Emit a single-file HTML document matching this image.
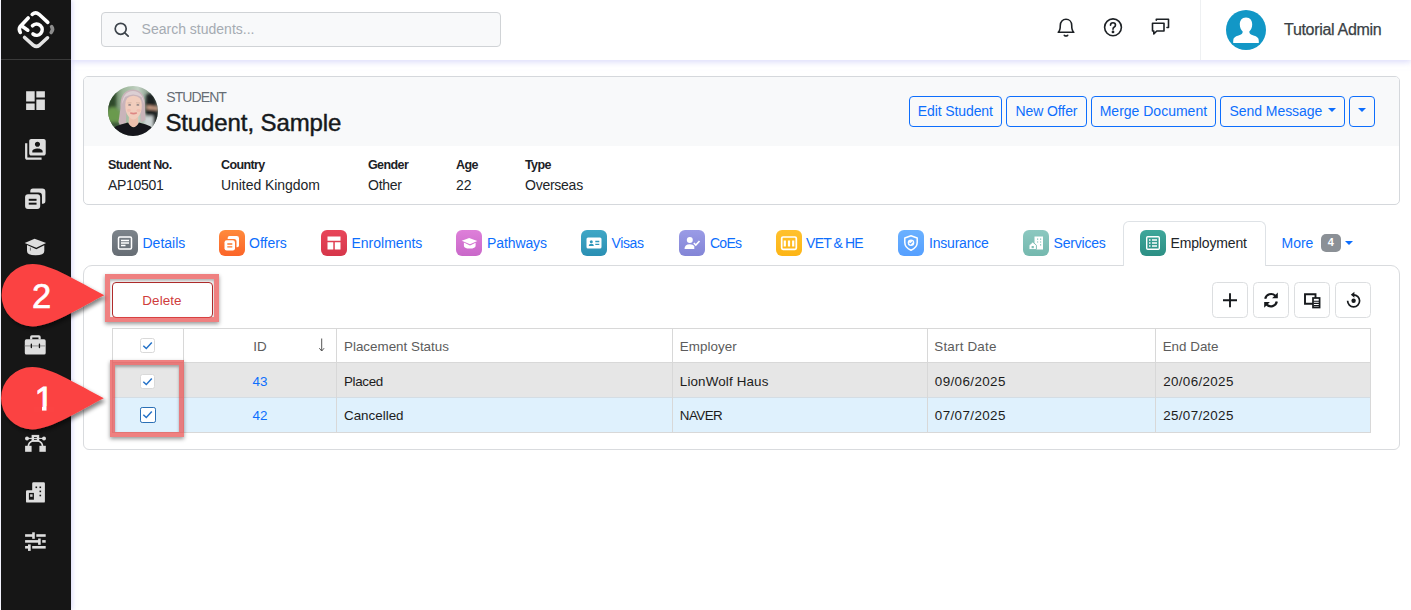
<!DOCTYPE html>
<html lang="en">
<head>
<meta charset="utf-8">
<title>Student - Employment</title>
<style>
*{box-sizing:border-box;margin:0;padding:0}
html,body{width:1411px;height:610px;overflow:hidden;background:#fff}
body{position:relative;font-family:"Liberation Sans",sans-serif;font-size:14px;color:#212529}
.abs{position:absolute}
.t{position:absolute;white-space:nowrap;line-height:1}
/* sidebar */
#side{z-index:5;position:absolute;left:1px;top:0;width:69.700px;height:610px;background:#161616;box-shadow:1px 0 5px rgba(190,190,245,.6)}
#side .div{position:absolute;left:0;top:59px;width:70px;height:1px;background:#3a3a3a}
#side svg{position:absolute}
/* topbar */
#top{position:absolute;left:71px;top:0;width:1340px;height:60px;background:#fff;box-shadow:0 2px 6px rgba(190,190,245,.55)}
#search{position:absolute;left:30px;top:12px;width:400px;height:34.500px;background:#f8f9fa;border:1px solid #d0d3d6;border-radius:4px}
#search span{position:absolute;left:39.600px;top:8.300px;font-size:14px;color:#a5abb2;line-height:16px}
#vsep{position:absolute;left:1128.900px;top:0;width:1px;height:60px;background:#eef0f2}
/* card */
#card{position:absolute;left:83px;top:75.800px;width:1316.500px;height:128.900px;border:1px solid #d5d8dc;border-radius:5px;background:#fff;overflow:hidden}
#card .hd{position:absolute;left:0;top:0;width:100%;height:68.800px;background:#f8f9fa}
.btn{position:absolute;top:18.800px;height:31.500px;border:1px solid #0d6efd;border-radius:4px;color:#0d6efd;font-size:14px;line-height:29.500px;text-align:center;background:transparent;white-space:nowrap}
.caret{position:absolute;width:0;height:0;border-left:4px solid transparent;border-right:4px solid transparent;border-top:4px solid #0d6efd}
.lab{position:absolute;top:81.400px;font-size:12.500px;font-weight:bold;color:#1c2126;line-height:14px;white-space:nowrap;letter-spacing:-.6px}
.val{position:absolute;top:99.900px;letter-spacing:-.05px;font-size:14px;color:#212529;line-height:16px;white-space:nowrap}
/* tabs */
.ic{position:absolute;top:230px;width:26px;height:26px;border-radius:6px}
.ic svg{position:absolute;left:0;top:0}
.tx{position:absolute;top:235px;font-size:14px;line-height:16px;color:#0d6efd;white-space:nowrap}
.tx.act{color:#212529}
.badge{position:absolute;width:19.500px;height:17.500px;border-radius:5px;background:#8b9096;color:#fff;font-size:11px;font-weight:bold;line-height:17.500px;text-align:center}
#tabline{display:none}
#acttab{position:absolute;left:1123px;top:221px;width:143px;height:45px;border:1px solid #dee2e6;border-bottom:none;border-radius:6px 6px 0 0;background:#fff}
#panel{position:absolute;left:83px;top:265px;width:1316.500px;height:184.500px;border:1px solid #d9dbde;border-radius:9px 9px 6px 6px}
/* grid */
#grid{position:absolute;left:111.700px;top:327.800px;width:1259.200px;height:105.200px;border:1px solid #d8d8d8;font-size:13.400px;color:#1c1c1c;overflow:hidden}
.row{position:absolute;left:0;width:100%}
.vl{position:absolute;top:0;width:1px;height:100%;background:#d8d8d8}
.ct{position:absolute;font-size:13.400px;line-height:15px;white-space:nowrap}
.ct.h{color:#5c5c5c}
.cb{position:absolute;width:15px;height:15px;background:#fff;border:1px solid #d9d9d9;border-radius:2.500px}
.cb.cbf{width:15.800px;height:15.800px;border:1.300px solid #2a6fb5;border-radius:2.200px}
#del{position:absolute;left:111.500px;top:281.600px;width:101px;height:36.600px;border:1.200px solid #b32d2d;border-radius:4px;background:#fff;color:#cf3c3c;font-size:13.400px;line-height:35.400px;text-align:center;letter-spacing:.1px}
.hl{position:absolute;z-index:8;border:5px solid rgba(232,74,74,.7);box-shadow:0 2px 4px rgba(0,0,0,.4),inset 0 2px 3px rgba(0,0,0,.3)}
.lnk{color:#0d6efd}
.tbtn{position:absolute;top:281.900px;width:36px;height:36px;border:1px solid #dcdee0;border-radius:4.500px;background:#fff}
</style>
</head>
<body>

<!-- SIDEBAR -->
<div id="side">
  <div class="div"></div>
  <!-- logo -->
  <svg style="left:-1px;top:0" width="71" height="59" viewBox="0 0 71 59" fill="none" stroke-linecap="round" stroke-linejoin="round" stroke-width="3.600">
    <path d="M32.200 14.300 Q35.700 11.400 39 14.300 L47.800 22.400" stroke="#fff"/>
    <path d="M51.600 26.600 Q53.700 29.300 51.200 32.500" stroke="#8c8c8c"/>
    <path d="M24.600 37.500 L33.400 45.300 Q36.400 47.600 39.400 45.300 L47.500 37.800" stroke="#e4e4e4"/>
    <path d="M28.200 18 L20.200 26.600 Q18.400 29.300 20.300 32.400" stroke="#fff"/>
    <path d="M22.500 26.500 L27.800 30.200" stroke="#fff"/>
    <path d="M32.500 25.800 A5.600 5.600 0 1 1 33 34" stroke="#fff"/>
  </svg>
  <!-- dashboard -->
  <svg style="left:21.800px;top:88px" width="25" height="25" viewBox="0 0 24 24" fill="#dedede"><path d="M3 13h8.200V3H3v10zm0 8h8.200v-6.200H3V21zm9.800 0H21V11h-8.200v10zm0-18v6.200H21V3h-8.200z"/></svg>
  <!-- students -->
  <svg style="left:22px;top:136.800px" width="24.800" height="24.800" viewBox="0 0 24 24" fill="#dedede"><path d="M4.200 6H2v14c0 1.100.9 2 2 2h14v-2.200H4.200V6zM20 2H8c-1.100 0-2 .9-2 2v12c0 1.100.9 2 2 2h12c1.100 0 2-.9 2-2V4c0-1.100-.9-2-2-2zm-6 2.500c1.380 0 2.500 1.120 2.500 2.500S15.380 9.500 14 9.500 11.500 8.380 11.500 7 12.620 4.500 14 4.500zM19 15H9v-1.250c0-1.660 3.340-2.500 5-2.500s5 .84 5 2.500V15z"/></svg>
  <!-- offers -->
  <svg style="left:21.800px;top:185.500px" width="25" height="25" viewBox="0 0 24 24"><path d="M9.500 2.500h9a3 3 0 0 1 3 3v9a2.500 2.500 0 0 1-2.500 2.500h-.8V9.500a3.200 3.200 0 0 0-3.200-3.200H7V5a2.500 2.500 0 0 1 2.500-2.500z" fill="#dedede"/><rect x="2" y="8" width="14.500" height="14" rx="2.800" fill="#dedede"/><rect x="5.500" y="12.300" width="7.500" height="1.900" fill="#161616"/><rect x="5.500" y="16" width="7.500" height="1.900" fill="#161616"/></svg>
  <!-- grad cap -->
  <svg style="left:17px;top:228px" width="36" height="36" viewBox="18 228 36 36" fill="#dedede"><path d="M34.600 238.800 L46.100 243 L36.300 247.800 L24.700 242.900 Z"/><path d="M27 245.100 L36.300 249.300 L44.300 245.300 V251 Q44.300 255.300 35.600 255.300 Q27 255.300 27 251 Z"/><path d="M30.400 247.600V250.600" stroke="#444" stroke-width=".7"/></svg>
  <!-- briefcase -->
  <svg style="left:17px;top:326px" width="36" height="36" viewBox="18 326 36 36" fill="#dedede"><path fill-rule="evenodd" d="M30.100 339.500 V337 Q30.100 335.200 31.900 335.200 H38.900 Q40.700 335.200 40.700 337 V339.500 H38.500 V337.600 H32.300 V339.500 Z"/><rect x="24.800" y="339.300" width="20.900" height="15.300" rx="1.600"/><rect x="24.800" y="345.300" width="20.900" height="1.200" fill="#9a9a9a"/><rect x="30.700" y="343.400" width="1.300" height="4.800" rx=".6" fill="#161616"/><rect x="38.800" y="343.400" width="1.300" height="4.800" rx=".6" fill="#161616"/></svg>
  <!-- bezier -->
  <svg style="left:17px;top:426px" width="36" height="36" viewBox="18 426 36 36" fill="#dedede"><rect x="31.600" y="434.900" width="7.600" height="7"/><rect x="34" y="437" width="2.800" height="2.800" fill="#161616"/><circle cx="27" cy="438.400" r="2"/><circle cx="44" cy="438.400" r="2"/><path d="M27 438.400H44" stroke="#dedede" stroke-width="1.100"/><path d="M32.300 441 Q28.600 442.300 28.300 446.500 M38.600 441 Q42.300 442.300 42.600 446.500" stroke="#dedede" stroke-width="1.700" fill="none"/><rect x="25.100" y="445.800" width="6.500" height="6"/><rect x="39.400" y="445.800" width="6.400" height="6"/></svg>
  <!-- building -->
  <svg style="left:17px;top:474px" width="36" height="36" viewBox="18 474 36 36" fill="#dedede"><path d="M33.400 482.300 H43.700 Q44.900 482.300 44.900 483.500 V501.400 Q44.900 502.600 43.700 502.600 H27.200 Q26 502.600 26 501.400 V491.400 Q26 490.200 27.200 490.200 H32.200 V483.500 Q32.200 482.300 33.400 482.300 Z"/><rect x="28.900" y="492.900" width="5" height="6.800" fill="#161616"/><rect x="30.100" y="494.300" width="2.500" height="2.500" fill="#d0d0d0"/><g fill="#161616"><rect x="35.500" y="486.500" width="1.600" height="1.600"/><rect x="39.500" y="486.500" width="1.600" height="1.600"/><rect x="39.500" y="490.600" width="1.600" height="1.600"/><rect x="39.500" y="494.700" width="1.600" height="1.600"/></g></svg>
  <!-- sliders -->
  <svg style="left:17px;top:524px" width="36" height="36" viewBox="18 524 36 36" fill="#dedede"><rect x="25.100" y="534.200" width="8" height="2.600"/><rect x="32.200" y="532.300" width="2.600" height="6.500"/><rect x="36.300" y="534.200" width="9.400" height="2.600"/><rect x="25.100" y="540.100" width="14" height="2.600"/><rect x="38.100" y="538.500" width="2.600" height="6.300"/><rect x="42.200" y="540.100" width="3.500" height="2.600"/><rect x="25.100" y="546" width="4" height="2.600"/><rect x="28" y="544.400" width="2.700" height="6.500"/><rect x="32.200" y="546" width="13.500" height="2.600"/></svg>
</div>

<!-- TOPBAR -->
<div id="top">
  <div id="search"><span>Search students...</span></div>
  <svg class="abs" style="left:40px;top:19px" width="20" height="20" viewBox="0 0 20 20" fill="none" stroke="#3d444b" stroke-width="1.7" stroke-linecap="round"><circle cx="9.700" cy="9.800" r="5.500"/><path d="M13.800 13.900 L17.200 17.200"/></svg>
  <div id="vsep"></div>
  <!-- bell -->
  <svg class="abs" style="left:984px;top:16px" width="22" height="22" viewBox="0 0 22 22" fill="none" stroke="#1d2125" stroke-width="1.600" stroke-linejoin="round" stroke-linecap="round"><path d="M3.200 16.300 C5.200 14.800 5.300 12.800 5.300 9.300 C5.300 5.800 7.700 3.300 11 3.300 C14.300 3.300 16.700 5.800 16.700 9.300 C16.700 12.800 16.800 14.800 18.800 16.300 Z"/><path d="M9.300 19.300 Q11 20.600 12.700 19.300"/></svg>
  <!-- help -->
  <svg class="abs" style="left:1031px;top:16px" width="22" height="22" viewBox="0 0 22 22" fill="none" stroke="#1d2125" stroke-width="1.600" stroke-linecap="round"><circle cx="11" cy="11.300" r="8.400"/><path d="M8.500 9.200 Q8.500 6.700 11 6.700 Q13.500 6.700 13.500 9 Q13.500 10.400 12 11.200 Q11 11.800 11 13.200"/><circle cx="11" cy="15.900" r=".6" fill="#1d2125"/></svg>
  <!-- chat -->
  <svg class="abs" style="left:1078px;top:16px" width="24" height="22" viewBox="0 0 24 22" fill="none" stroke="#1d2125" stroke-width="1.600" stroke-linejoin="round" stroke-linecap="round"><path d="M3.500 7.300 H15 V15 H7.800 L4.800 18 V15 H3.500 Z"/><path d="M7.300 4.300 V3.300 H19.500 V11.500 H18"/></svg>
  <!-- avatar -->
  <svg class="abs" style="left:1155px;top:10px" width="40" height="40" viewBox="0 0 40 40"><circle cx="20" cy="20" r="20" fill="#1297c6"/><path d="M20 7.500 C24.300 7.500 26.200 10.800 26.200 14.500 C26.200 17.500 24.800 20.300 23.300 21.600 C23.300 23.800 24.500 24.700 27.500 25.600 C31 26.600 32.800 27.800 32.800 31 L32.800 33 L7.200 33 L7.200 31 C7.200 27.800 9 26.600 12.500 25.600 C15.500 24.700 16.700 23.800 16.700 21.600 C15.200 20.300 13.800 17.500 13.800 14.500 C13.800 10.800 15.700 7.500 20 7.500 Z" fill="#fff"/></svg>
  <div class="t" style="left:1213px;top:21px;font-size:16px;color:#3a3f45;line-height:18px;letter-spacing:-.3px;-webkit-text-stroke:.25px #3a3f45">Tutorial Admin</div>
</div>

<!-- STUDENT CARD -->
<div id="card">
  <div class="hd"></div>
  <svg class="abs" style="left:24px;top:9.200px" width="50" height="50" viewBox="0 0 50 50">
    <defs><clipPath id="avc"><circle cx="25" cy="25" r="24.900"/></clipPath>
    <filter id="avb" x="-10%" y="-10%" width="120%" height="120%"><feGaussianBlur stdDeviation=".7"/></filter>
    <filter id="avb2" x="-10%" y="-10%" width="120%" height="120%"><feGaussianBlur stdDeviation="1.600"/></filter>
    <linearGradient id="avbg" x1="0" x2="1" y1="0" y2="0"><stop offset="0" stop-color="#3c5a38"/><stop offset=".3" stop-color="#9db79a"/><stop offset=".6" stop-color="#c3d2c4"/><stop offset=".8" stop-color="#8fa291"/><stop offset="1" stop-color="#55635a"/></linearGradient></defs>
    <g clip-path="url(#avc)">
      <rect width="50" height="50" fill="url(#avbg)"/>
      <g filter="url(#avb2)">
        <rect x="-2" y="2" width="10" height="22" fill="#2f4a2c"/>
        <ellipse cx="5" cy="30" rx="8" ry="9" fill="#6a9a4e"/>
        <rect x="-2" y="36" width="14" height="8" fill="#3d5a3a"/>
        <path d="M38 9 Q43 5 47 10 L52 40 L40 42 L37 24 Z" fill="#1c2224"/>
        <rect x="36" y="30" width="9" height="12" fill="#cfd5d6"/>
        <path d="M38.500 19.500 L50 21 L50 24 L39 23 Z" fill="#d9a98f"/>
      </g>
      <g filter="url(#avb)">
        <path d="M12.500 22 Q11.500 4 25 3.400 Q37.500 4 37 21 L37.500 34 L33 36 L32 22 L18.500 22 L18 37 L12 39 L10.500 36 Z" fill="#c9b4ba"/>
        <path d="M14 18 Q15 5.500 25 5 Q35 5.500 36 18 L33.500 11 Q25 6 17 11 Z" fill="#dccfd3"/>
        <path d="M21 31 L20.500 41 L30.500 41 L30 31 Z" fill="#ecc0ad"/>
        <path d="M17.300 19 Q17 10 25.500 9.700 Q34 10 33.800 19 Q33.800 27 30.500 30.500 Q27.500 33.500 25.500 33.500 Q23.500 33.500 20.500 30.500 Q17.300 27 17.300 19 Z" fill="#f1cdbd"/>
        <path d="M-1 51 Q2 41 13 38.500 L20 36.500 Q25.500 46 31 36.500 L38 38.500 Q47 41 50 51 Z" fill="#15171a"/>
        <path d="M22.300 27 Q25.500 28.800 28.800 27 Q25.500 27.600 22.300 27 Z" stroke="#dd8683" stroke-width="1.300" fill="#dd8683"/>
        <ellipse cx="21.600" cy="18.900" rx="1.500" ry=".7" fill="#6e6a72"/><ellipse cx="29.900" cy="18.900" rx="1.500" ry=".7" fill="#6e6a72"/>
        <path d="M19.500 17 L23.500 16.800 M28 16.800 L32 17" stroke="#c8a592" stroke-width=".6"/>
        <ellipse cx="21" cy="24.500" rx="2" ry="1.400" fill="#efb9ac" opacity=".7"/><ellipse cx="30.500" cy="24.500" rx="2" ry="1.400" fill="#efb9ac" opacity=".7"/>
      </g>
    </g>
  </svg>
  <div class="t" style="left:82.200px;top:12.300px;font-size:14px;line-height:16px;color:#666d74;letter-spacing:-.9px">STUDENT</div>
  <div class="t" style="left:81.400px;top:32.400px;font-size:24px;line-height:28px;color:#16191c;font-weight:normal;-webkit-text-stroke:.45px #16191c;letter-spacing:-.1px">Student, Sample</div>
  <div class="btn" style="left:824.550px;width:93.500px;letter-spacing:-.1px">Edit Student</div>
  <div class="btn" style="left:921.800px;width:81.400px;letter-spacing:-.1px">New Offer</div>
  <div class="btn" style="left:1006.700px;width:125.400px">Merge Document</div>
  <div class="btn" style="left:1135.700px;width:125.700px;text-align:left;padding-left:8.800px;letter-spacing:-.05px">Send Message</div>
  <div class="btn" style="left:1264.800px;width:26.300px"></div>
  <div class="caret" style="left:1244.200px;top:30.800px"></div>
  <div class="caret" style="left:1273.900px;top:30.800px"></div>
  <div class="lab" style="left:24px">Student No.</div><div class="val" style="left:24px;letter-spacing:-.3px">AP10501</div>
  <div class="lab" style="left:137px">Country</div><div class="val" style="left:137px">United Kingdom</div>
  <div class="lab" style="left:284px">Gender</div><div class="val" style="left:284px;letter-spacing:-.25px">Other</div>
  <div class="lab" style="left:372px">Age</div><div class="val" style="left:372px">22</div>
  <div class="lab" style="left:441px">Type</div><div class="val" style="left:441px;letter-spacing:-.25px">Overseas</div>
</div>

<!-- TABS -->
<div id="tabline"></div>
<div id="panel"></div>
<div id="acttab"></div>
<div class="ic" style="left:112px;background:linear-gradient(180deg,#7d848b,#666d74)"><svg width="26" height="26" viewBox="0 0 26 26"><rect x="6.500" y="7" width="13" height="12" rx="1.200" fill="none" stroke="#fff" stroke-width="1.500"/><path d="M9 10.500h8M9 13h8M9 15.500h4.500" stroke="#fff" stroke-width="1.300"/></svg></div>
<div class="tx" style="left:142.5px">Details</div>
<div class="ic" style="left:219px;background:linear-gradient(180deg,#ff8a3c,#fb6428)"><svg width="26" height="26" viewBox="0 0 26 26"><path d="M10.500 6h7.300a2.200 2.200 0 0 1 2.200 2.200v7.300a1.800 1.800 0 0 1-1.800 1.800h-.7v-5.800a2.500 2.500 0 0 0-2.500-2.500H8.700v-1.200A1.800 1.800 0 0 1 10.500 6z" fill="#fff"/><rect x="5.500" y="10.300" width="10.500" height="10.200" rx="2.200" fill="#fff"/><path d="M8.300 14h5M8.300 16.800h5" stroke="#fb7a30" stroke-width="1.300"/></svg></div>
<div class="tx" style="left:249px">Offers</div>
<div class="ic" style="left:321px;background:linear-gradient(180deg,#e8465a,#d6364a)"><svg width="26" height="26" viewBox="0 0 26 26"><path d="M6.500 6.500h13v4.300h-13zM6.500 12.300h5.800v7.200H6.500zM13.800 12.300h5.700v7.200h-5.700z" fill="#fff"/></svg></div>
<div class="tx" style="left:351.5px">Enrolments</div>
<div class="ic" style="left:456px;background:linear-gradient(180deg,#de7fd9,#c968c9)"><svg width="26" height="26" viewBox="0 0 26 26"><path d="M13.200 7.900 L21.300 10.900 L14 14.300 L5.700 10.800 Z" fill="#fff"/><path d="M7.900 12.600 L14 15.400 L19.600 12.700 V15.800 Q19.600 18.600 13.700 18.600 Q7.900 18.600 7.900 15.800 Z" fill="#fff"/></svg></div>
<div class="tx" style="left:487px;letter-spacing:-.1px">Pathways</div>
<div class="ic" style="left:581px;background:linear-gradient(180deg,#3fa7c6,#2a8fb3)"><svg width="26" height="26" viewBox="0 0 26 26"><rect x="5.500" y="7.500" width="15" height="11" rx="1.500" fill="#fff"/><circle cx="10.300" cy="11.700" r="1.500" fill="#2f97ba"/><path d="M7.700 16 Q7.700 13.800 10.300 13.800 Q12.900 13.800 12.900 16 Z" fill="#2f97ba"/><path d="M14.300 11.500h4M14.300 14.300h4" stroke="#2f97ba" stroke-width="1.300"/></svg></div>
<div class="tx" style="left:611.5px;letter-spacing:-.4px">Visas</div>
<div class="ic" style="left:679px;background:linear-gradient(180deg,#9a9be6,#8385d6)"><svg width="26" height="26" viewBox="0 0 26 26"><circle cx="10.800" cy="10" r="3" fill="#fff"/><path d="M5.500 19 Q5.500 14.300 10.800 14.300 Q14 14.300 15.300 16 L15.300 19 Z" fill="#fff"/><path d="M14.800 13 L16.800 15 L20.500 11" fill="none" stroke="#fff" stroke-width="1.600"/></svg></div>
<div class="tx" style="left:710px;letter-spacing:-.75px">CoEs</div>
<div class="ic" style="left:776px;background:linear-gradient(180deg,#ffc12e,#fdb515)"><svg width="26" height="26" viewBox="0 0 26 26"><rect x="5.700" y="7" width="14.600" height="12.300" rx="1.300" fill="none" stroke="#fff" stroke-width="1.700"/><path d="M8.800 10.500v6M13 10.500v6M17.200 10.500v6" stroke="#fff" stroke-width="2.200"/></svg></div>
<div class="tx" style="left:806px;letter-spacing:-.7px;word-spacing:-.5px">VET &amp; HE</div>
<div class="ic" style="left:898px;background:linear-gradient(180deg,#6bb1ff,#559fff)"><svg width="26" height="26" viewBox="0 0 26 26"><path d="M13 5.800 L19.200 8 V12.500 Q19.200 17.500 13 20.300 Q6.800 17.500 6.800 12.500 V8 Z" fill="none" stroke="#fff" stroke-width="1.500" stroke-linejoin="round"/><circle cx="13" cy="12.800" r="3.300" fill="#fff"/><path d="M11.400 12.800 L12.600 14 L14.700 11.700" fill="none" stroke="#5fa8ff" stroke-width="1.100"/></svg></div>
<div class="tx" style="left:929px;letter-spacing:-.2px">Insurance</div>
<div class="ic" style="left:1023px;background:linear-gradient(180deg,#8cc8c0,#74b8ae)"><svg width="26" height="26" viewBox="0 0 26 26"><path d="M11.500 6.500h8.500v13h-8.500z" fill="#fff"/><path d="M6 19.500v-4.300l3.700-3.200 3.700 3.200v4.300z" fill="#fff" stroke="#80c0b7" stroke-width="1"/><rect x="8.600" y="16" width="2.200" height="2.200" fill="#80c0b7"/><path d="M14 9.200h1.200M17 9.200h1.200M14 12h1.200M17 12h1.200M17 14.800h1.200" stroke="#80c0b7" stroke-width="1.200"/></svg></div>
<div class="tx" style="left:1053.5px;letter-spacing:-.2px">Services</div>
<div class="ic" style="left:1140px;background:linear-gradient(180deg,#3fa79b,#2c8f84)"><svg width="26" height="26" viewBox="0 0 26 26"><rect x="6.700" y="6.700" width="12.600" height="12.600" rx="1" fill="none" stroke="#fff" stroke-width="1.400"/><path d="M9 10h1.500M12 10h5M9 13h1.500M12 13h5M9 16h1.500M12 16h5" stroke="#fff" stroke-width="1.300"/></svg></div>
<div class="tx act" style="left:1170.5px;letter-spacing:-.15px">Employment</div>
<div class="tx" style="left:1281.500px">More</div>
<div class="badge" style="left:1321px;top:234px">4</div>
<div class="caret" style="left:1344.500px;top:241px;border-top-color:#0d6efd"></div>

<!-- TOOLBAR -->
<div id="del">Delete</div>
<div class="tbtn" style="left:1211.900px"><svg width="34" height="34" viewBox="0 0 34 34"><path d="M17 10.200v14M10 17.200h14" stroke="#16191c" stroke-width="1.900" fill="none"/></svg></div>
<div class="tbtn" style="left:1252.900px"><svg width="34" height="34" viewBox="0 0 34 34" fill="none" stroke="#16191c" stroke-width="2.200"><path d="M11.200 15.800 A6 6 0 0 1 21.300 12.800"/><path d="M22.800 18.600 A6 6 0 0 1 12.700 21.600"/><path d="M23.800 9.600 V15.300 H18.100 Z" fill="#16191c" stroke="none"/><path d="M10.200 24.800 V19.100 H15.900 Z" fill="#16191c" stroke="none"/></svg></div>
<div class="tbtn" style="left:1293.800px"><svg width="34" height="34" viewBox="0 0 34 34"><path d="M10 11.200h10.500v9.500h-10.500z" fill="none" stroke="#16191c" stroke-width="1.900"/><rect x="18" y="15" width="6.600" height="9.500" fill="#fff" stroke="#16191c" stroke-width="1.700"/><path d="M18.500 18.200h5.500M18.500 20.400h5.500M18.500 22.600h5.500" stroke="#16191c" stroke-width="1.100"/></svg></div>
<div class="tbtn" style="left:1334.800px"><svg width="34" height="34" viewBox="0 0 34 34" fill="none" stroke="#16191c" stroke-width="1.700"><path d="M17.600 11.800 A6 6 0 1 1 11.600 17.800"/><path d="M18.400 8.800 L14.800 11.800 L18.400 14.800 Z" fill="#16191c" stroke="none"/><circle cx="17.600" cy="17.800" r="2.200" fill="#16191c" stroke="none"/></svg></div>

<!-- GRID -->
<div id="grid">
  <div class="row" style="top:0px;height:33px;background:#fff"></div>
  <div class="row" style="top:33px;height:35px;background:#e6e6e6;border-top:1px solid #d8d8d8"></div>
  <div class="row" style="top:68px;height:35.500px;background:#dff1fd;border-top:1px solid #d4dde4"></div>
  <div class="vl" style="left:70.8px"></div>
  <div class="vl" style="left:223.2px"></div>
  <div class="vl" style="left:559.5px"></div>
  <div class="vl" style="left:814.7px"></div>
  <div class="vl" style="left:1042.6px"></div>
  <div class="cb" style="left:27.7px;top:9.6px"><svg width="15" height="15" viewBox="0 0 15 15" style="position:absolute;left:-1px;top:-1px"><path d="M3.300 7.700 L6.300 10.500 L11.800 4.600" fill="none" stroke="#2472c8" stroke-width="1.500"/></svg></div>
  <div class="cb" style="left:27.7px;top:44.8px"><svg width="15" height="15" viewBox="0 0 15 15" style="position:absolute;left:-1px;top:-1px"><path d="M3.300 7.700 L6.300 10.500 L11.800 4.600" fill="none" stroke="#2472c8" stroke-width="1.500"/></svg></div>
  <div class="cb cbf" style="left:27.4px;top:78.3px"><svg width="15" height="15" viewBox="0 0 15 15" style="position:absolute;left:-1px;top:-1px"><path d="M3.300 7.700 L6.300 10.500 L11.800 4.600" fill="none" stroke="#2472c8" stroke-width="1.500"/></svg></div>
  <div class="ct h" style="left:140.5px;top:10.16px">ID</div>
  <div class="ct h" style="left:231.3px;top:10.16px">Placement Status</div>
  <div class="ct h" style="left:567.1px;top:10.16px;letter-spacing:0.05px">Employer</div>
  <div class="ct h" style="left:821.6px;top:10.16px;letter-spacing:0.2px">Start Date</div>
  <div class="ct h" style="left:1050.0px;top:10.16px">End Date</div>
  <div class="ct lnk" style="left:139.8px;top:44.76px">43</div>
  <div class="ct " style="left:231.3px;top:44.76px;letter-spacing:-0.35px">Placed</div>
  <div class="ct " style="left:567.1px;top:44.76px;letter-spacing:0.15px">LionWolf Haus</div>
  <div class="ct " style="left:822.1px;top:44.76px;letter-spacing:0.4px">09/06/2025</div>
  <div class="ct " style="left:1050.5px;top:44.76px;letter-spacing:0.35px">20/06/2025</div>
  <div class="ct lnk" style="left:139.8px;top:79.06px">42</div>
  <div class="ct " style="left:231.3px;top:79.06px">Cancelled</div>
  <div class="ct " style="left:567.1px;top:79.06px;letter-spacing:-0.55px">NAVER</div>
  <div class="ct " style="left:822.1px;top:79.06px;letter-spacing:0.4px">07/07/2025</div>
  <div class="ct " style="left:1050.5px;top:79.06px;letter-spacing:0.35px">25/07/2025</div>
  <svg class="abs" style="left:203.3px;top:8.2px" width="12" height="16" viewBox="0 0 12 16"><path d="M5.700 1.500v12.500M3.300 11.200 L5.700 14 L8.100 11.200" fill="none" stroke="#555" stroke-width="1"/></svg>
</div>

<!-- HIGHLIGHTS -->
<div class="hl" style="left:104.900px;top:273.900px;width:114px;height:48px"></div>
<div class="hl" style="left:109.800px;top:360.400px;width:74.500px;height:76.800px"></div>

<!-- CALLOUTS -->
<svg class="abs" style="left:0;top:255px;z-index:10" width="125" height="190" viewBox="0 255 125 190">
  <defs><filter id="ds" x="-20%" y="-20%" width="150%" height="150%"><feGaussianBlur in="SourceAlpha" stdDeviation="2"/><feOffset dx="1.500" dy="2.500"/><feComponentTransfer><feFuncA type="linear" slope=".5"/></feComponentTransfer><feMerge><feMergeNode/><feMergeNode in="SourceGraphic"/></feMerge></filter></defs>
  <g filter="url(#ds)" fill="#fb4343">
    <path d="M104.300 295.200 C80 283 51.500 264.100 32.750 264.100 A31.150 31.150 0 1 0 32.750 326.400 C51.500 326.400 80 307.400 104.300 295.200 Z"/>
    <path transform="translate(-.5,103)" d="M104.300 295.200 C80 283 51.500 264.100 32.750 264.100 A31.150 31.150 0 1 0 32.750 326.400 C51.500 326.400 80 307.400 104.300 295.200 Z"/>
  </g>
  <text x="41.700" y="308" style="font-family:'Liberation Sans',sans-serif" font-size="34.500" fill="#fff" stroke="#fff" stroke-width=".7" text-anchor="middle">2</text>
  <text x="44.200" y="410.200" style="font-family:'Liberation Sans',sans-serif" font-size="33.800" fill="#fff" stroke="#fff" stroke-width=".9" text-anchor="middle">1</text>
  <path d="M34 406.400H42V412H34Z M46.500 406.400H54V412H46.500Z" fill="#fb4343"/>
</svg>

</body>
</html>
